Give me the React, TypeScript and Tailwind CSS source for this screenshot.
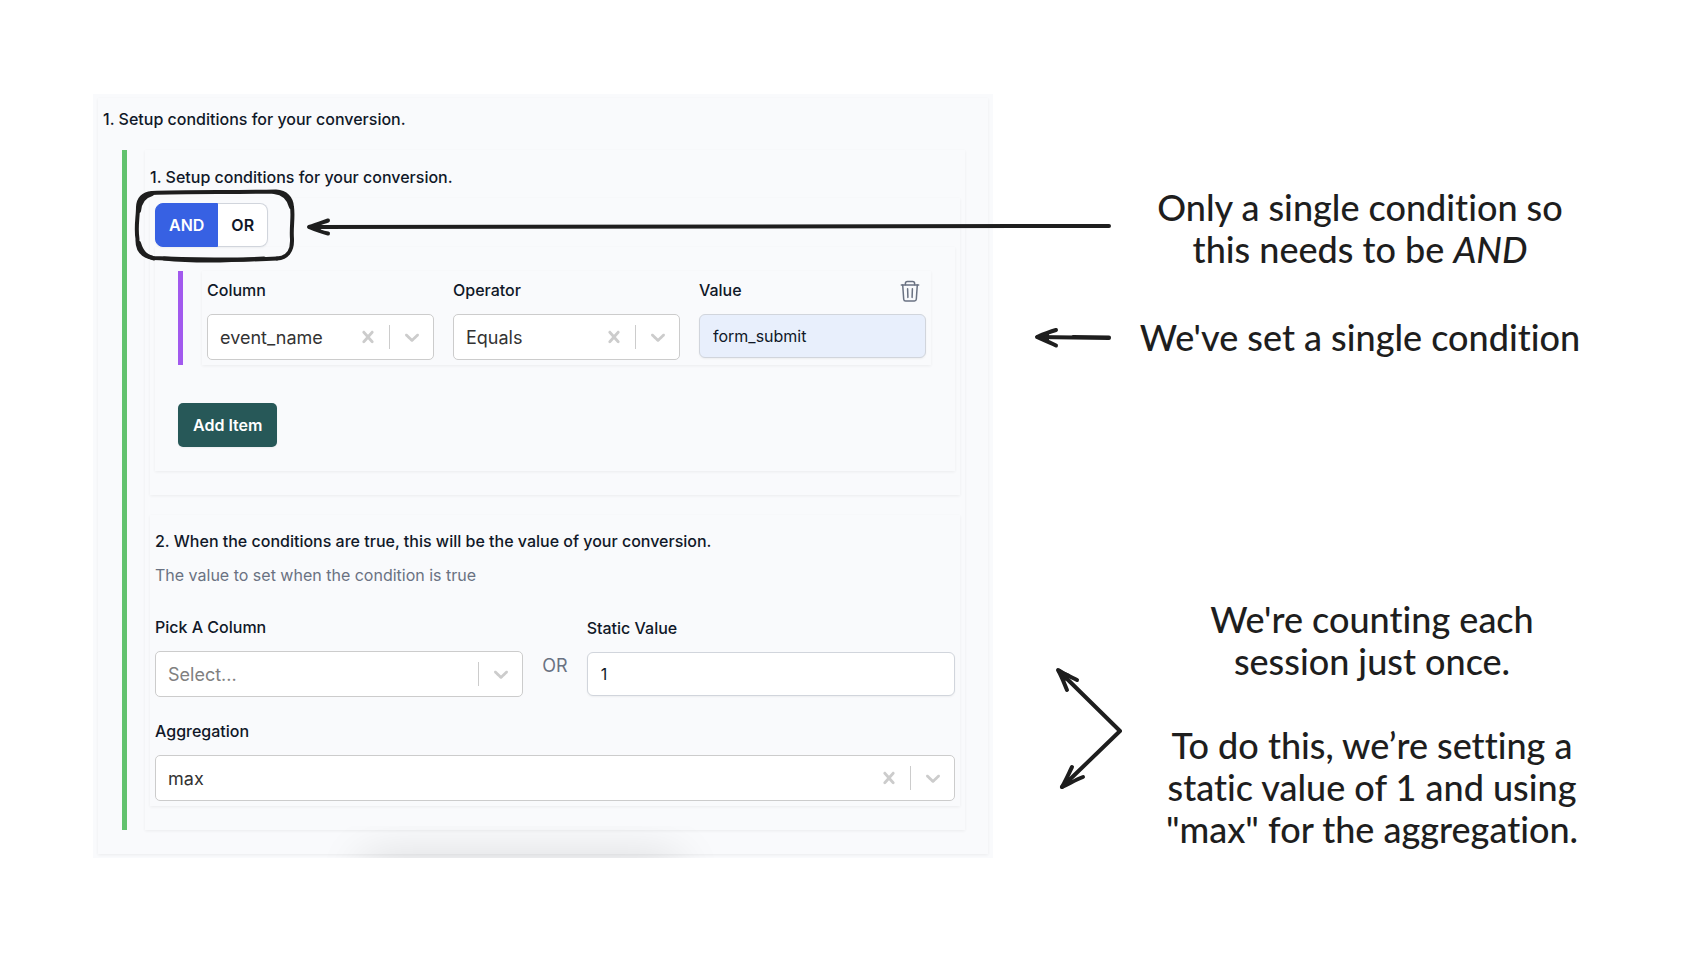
import React, { useState } from "react";
import clsx from "clsx";

type SelectFieldProps = {
  id: string;
  label: string;
  options: string[];
  value: string;
  onChange: (value: string) => void;
  clearable?: boolean;
};

const columnOptions = ["event_name", "page_location", "session_id"];
const operatorOptions = ["Equals", "Not Equals", "Contains"];
const aggregationOptions = ["max", "min", "sum", "count"];

const labelClass = "block text-base leading-6 font-medium text-gray-900";
const cardClass = "shadow-[0_1px_3px_rgba(0,0,0,0.06)]";
const inputClass = "w-full h-[44px] px-[13px] text-base text-gray-900 border border-gray-300 rounded-md shadow-xs outline-none";

const SelectField: React.FC<SelectFieldProps> = ({ id, label, options, value, onChange, clearable = true }) => {
  return (
    <div className="min-w-0">
      <label htmlFor={id} className={labelClass}>{label}</label>
      <div className="relative flex items-center h-[46px] mt-3 bg-white border border-[#cccccc] rounded-[5px]">
        <select
          id={id}
          value={value}
          onChange={(e) => onChange(e.target.value)}
          className={clsx(
            "flex-1 min-w-0 h-full pl-3 pt-[2px] appearance-none bg-transparent text-lg outline-none",
            value ? "text-[#333333]" : "text-[#808080]"
          )}
        >
          <option value="">Select...</option>
          {options.map((option) => (
            <option key={option} value={option}>{option}</option>
          ))}
        </select>
        {clearable && (
          <button
            type="button"
            aria-label={`Clear ${label}`}
            className="flex items-center justify-center w-[43px] shrink-0 text-[#cccccc]"
            onClick={() => onChange("")}
          >
            <svg viewBox="0 0 20 20" className="w-6 h-6" fill="currentColor">
              <path d="M14.348 14.849c-0.469 0.469-1.229 0.469-1.697 0l-2.651-3.030-2.651 3.029c-0.469 0.469-1.229 0.469-1.697 0-0.469-0.469-0.469-1.229 0-1.697l2.758-3.15-2.759-3.152c-0.469-0.469-0.469-1.228 0-1.697s1.228-0.469 1.697 0l2.652 3.031 2.651-3.031c0.469-0.469 1.228-0.469 1.697 0s0.469 1.229 0 1.697l-2.758 3.152 2.758 3.15c0.469 0.469 0.469 1.229 0 1.698z" />
            </svg>
          </button>
        )}
        <span className="w-px h-6 shrink-0 bg-[#cccccc]" />
        <span className="flex items-center justify-center w-[43px] shrink-0 text-[#cccccc] pointer-events-none">
          <svg viewBox="0 0 20 20" className="w-6 h-6" fill="currentColor">
            <path d="M4.516 7.548c0.436-0.446 1.043-0.481 1.576 0l3.908 3.747 3.908-3.747c0.533-0.481 1.141-0.446 1.574 0 0.436 0.445 0.408 1.197 0 1.615-0.406 0.418-4.695 4.502-4.695 4.502-0.217 0.223-0.502 0.335-0.787 0.335s-0.57-0.112-0.789-0.335c0 0-4.287-4.084-4.695-4.502s-0.436-1.17 0-1.615z" />
          </svg>
        </span>
      </div>
    </div>
  );
};

const TrashIcon = () => (
  <svg width="20" height="22" viewBox="0 0 20 22" fill="none" stroke="currentColor" strokeWidth="1.5" strokeLinecap="round" strokeLinejoin="round">
    <path d="M1.3 5H18.7" />
    <path d="M5.4 4.8V3.6C5.4 2.4 6.2 1.6 7.4 1.6H12.6C13.8 1.6 14.6 2.4 14.6 3.6V4.8" />
    <path d="M2.7 5L3.7 19.2C3.8 20.4 4.5 21 5.6 21H14.4C15.5 21 16.2 20.4 16.3 19.2L17.3 5" />
    <path d="M7.6 8.8L7.9 17.4M12.4 8.8L12.1 17.4" />
  </svg>
);

const SketchFrame = () => (
  <svg width="162" height="74" viewBox="0 0 162 74" fill="none" stroke="#1e1e1e" strokeLinecap="round" className="absolute -left-[21px] -top-[14px] pointer-events-none">
    <path d="M18 4C50 2.500 100 3.500 142 2.500C152 3 157.500 9 158 18C159.500 28 157 38 158 50C158.500 62 153 69 143 69.500" strokeWidth="4" />
    <path d="M143 69.500C110 71.500 50 70.500 19 69C8 67 3 60 3.500 50C1.500 38 4 28 4 18C4.500 9 9 5 18 4" strokeWidth="4" />
    <path d="M30 69.500C60 72.500 100 71.500 130 69.500" strokeWidth="4" />
    <path d="M140 3C150 4 155 10 157 18M5 54C8 64 12 67 20 69.500M5 22C6 12 10 7 18 5" strokeWidth="4" />
  </svg>
);

const LongArrow = () => (
  <svg width="808" height="20" viewBox="0 0 808 20" fill="none" stroke="#1e1e1e" strokeWidth="4" strokeLinecap="round" strokeLinejoin="round" className="absolute left-[151px] top-[14px] z-10 pointer-events-none">
    <path d="M4 10L803 9" />
    <path d="M22 3.500C15 6 10 8 3 10C10 13 15 15 22 16.500" />
    <path d="M3 10L14 8.500V12Z" fill="#1e1e1e" strokeWidth="2" />
  </svg>
);

const App: React.FC = () => {
  const [mode, setMode] = useState("AND");
  const [column, setColumn] = useState("event_name");
  const [operator, setOperator] = useState("Equals");
  const [value, setValue] = useState("form_submit");
  const [pickedColumn, setPickedColumn] = useState("");
  const [staticValue, setStaticValue] = useState("1");
  const [aggregation, setAggregation] = useState("max");

  return (
    <main className="grid grid-cols-[900fr_614fr] items-start px-[93px] pt-[94px] pb-[100px] bg-white font-[Inter,sans-serif]">
      <section className="relative bg-[#f9fafc] px-[5px] pt-1 pb-1">
        <div className={clsx(cardClass, "pt-[9px] pb-6 pl-[5px] pr-[23px]")}>
          <h1 className={labelClass}>1. Setup conditions for your conversion.</h1>

          <div className="mt-[19px] ml-[19px] pl-[18px] border-l-[5px] border-[#62c26e]">
            <div className={clsx(cardClass, "p-[5px] pt-[15px] pb-6")}>
              <h2 className={labelClass}>1. Setup conditions for your conversion.</h2>

              <div className={clsx(cardClass, "mt-[9px] px-[5px] pt-[5px] pb-6")}>
                <div className="relative inline-flex align-top">
                  <div className="flex rounded-lg shadow-xs">
                    {["AND", "OR"].map((item) => (
                      <button
                        key={item}
                        type="button"
                        aria-pressed={mode === item}
                        className={clsx(
                          "h-[44px] px-[13px] text-base font-semibold border first:rounded-l-lg last:rounded-r-lg",
                          mode === item
                            ? "bg-[#3761e3] border-[#3761e3] text-white"
                            : "bg-white border-gray-300 border-l-0 text-gray-900"
                        )}
                        onClick={() => setMode(item)}
                      >
                        {item}
                      </button>
                    ))}
                  </div>
                  <SketchFrame />
                  <LongArrow />
                </div>

                <div className={clsx(cardClass, "pt-6 pb-6 pl-[23px] pr-6")}>
                  <div className="pl-[19px] border-l-[5px] border-[#a259ee]">
                    <div className={clsx(cardClass, "grid grid-cols-3 gap-[19px] px-[5px] pt-[7px] pb-[5px]")}>
                      <SelectField id="column" label="Column" options={columnOptions} value={column} onChange={setColumn} />
                      <SelectField id="operator" label="Operator" options={operatorOptions} value={operator} onChange={setOperator} />
                      <div className="min-w-0">
                        <div className="flex justify-between items-end h-6 pr-[6px]">
                          <label htmlFor="value" className={labelClass}>Value</label>
                          <button type="button" aria-label="Delete condition" className="text-gray-500">
                            <TrashIcon />
                          </button>
                        </div>
                        <input
                          id="value"
                          type="text"
                          value={value}
                          onChange={(e) => setValue(e.target.value)}
                          className={clsx(inputClass, "mt-3 bg-[#e8effc]")}
                        />
                      </div>
                    </div>
                  </div>
                  <button type="button" className="mt-[38px] h-[44px] px-[15px] rounded-[5px] bg-[#275858] text-base font-semibold text-white shadow-xs">
                    Add Item
                  </button>
                </div>
              </div>

              <div className={clsx(cardClass, "mt-5 px-[5px] pt-[14px] pb-[5px]")}>
                <h2 className={labelClass}>2. When the conditions are true, this will be the value of your conversion.</h2>
                <p className="mt-[10px] text-base leading-6 text-gray-500">The value to set when the condition is true</p>

                <div className="grid grid-cols-[1fr_auto_1fr] items-center gap-[19px] mt-7">
                  <SelectField id="picked-column" label="Pick A Column" options={columnOptions} value={pickedColumn} onChange={setPickedColumn} clearable={false} />
                  <span className="pt-5 text-lg leading-6 font-normal text-gray-500">OR</span>
                  <div className="min-w-0">
                    <label htmlFor="static-value" className={labelClass}>Static Value</label>
                    <input
                      id="static-value"
                      type="text"
                      value={staticValue}
                      onChange={(e) => setStaticValue(e.target.value)}
                      className={clsx(inputClass, "mt-3 bg-white")}
                    />
                  </div>
                </div>

                <div className="mt-[22px]">
                  <SelectField id="aggregation" label="Aggregation" options={aggregationOptions} value={aggregation} onChange={setAggregation} />
                </div>
              </div>
            </div>
          </div>
        </div>

        {/* soft shade of whatever sits just under the panel */}
        <div className="absolute inset-x-0 bottom-0 h-8 overflow-hidden pointer-events-none">
          <div className="mt-8 ml-[30%] w-[35%] h-10 shadow-[0_0_48px_rgba(0,0,0,0.14)]" />
        </div>
      </section>

      <aside className="pt-[92px] font-[Lato,sans-serif] text-[36px] leading-[42px] font-medium text-[#1e1e1e] text-center [font-variant-ligatures:none]">
        <p className="pl-[144px] pr-6">
          Only a single condition so
          <br />
          this needs to be <em>AND</em>
        </p>

        <div className="grid grid-cols-[144px_1fr] mt-[46px]">
          <svg width="144" height="42" viewBox="0 0 144 42" fill="none" stroke="#1e1e1e" strokeWidth="4" strokeLinecap="round" strokeLinejoin="round">
            <path d="M45 21L116 22M80 21L116 21.500" />
            <path d="M63 14C56 16 51 18 44 21C51 24 56 26 63 29.500" />
            <path d="M44 21L55 18V24Z" fill="#1e1e1e" strokeWidth="2" />
          </svg>
          <p className="pr-6 whitespace-nowrap">We've set a single condition</p>
        </div>

        <div className="grid grid-cols-[144px_1fr] mt-[240px]">
          <svg width="144" height="252" viewBox="0 2 144 252" fill="none" stroke="#1e1e1e" strokeWidth="4" strokeLinecap="round" strokeLinejoin="round">
            <path d="M66 75L127 135L69 191" />
            <path d="M84 84C78 81 71 78 65 74C69 81 71 87 74 94" />
            <path d="M65 74L76 79L72 84Z" fill="#1e1e1e" strokeWidth="2" />
            <path d="M79 171C76 177 73 184 69 191C76 188 82 184 90 181" />
            <path d="M69 191L75 181L79 186Z" fill="#1e1e1e" strokeWidth="2" />
          </svg>
          <div className="whitespace-nowrap">
            <p>
              We're counting each
              <br />
              session just once.
            </p>
            <p className="mt-[42px]">
              To do this, we’re setting a
              <br />
              static value of 1 and using
              <br />
              "max" for the aggregation.
            </p>
          </div>
        </div>
      </aside>
    </main>
  );
};

export default App;
